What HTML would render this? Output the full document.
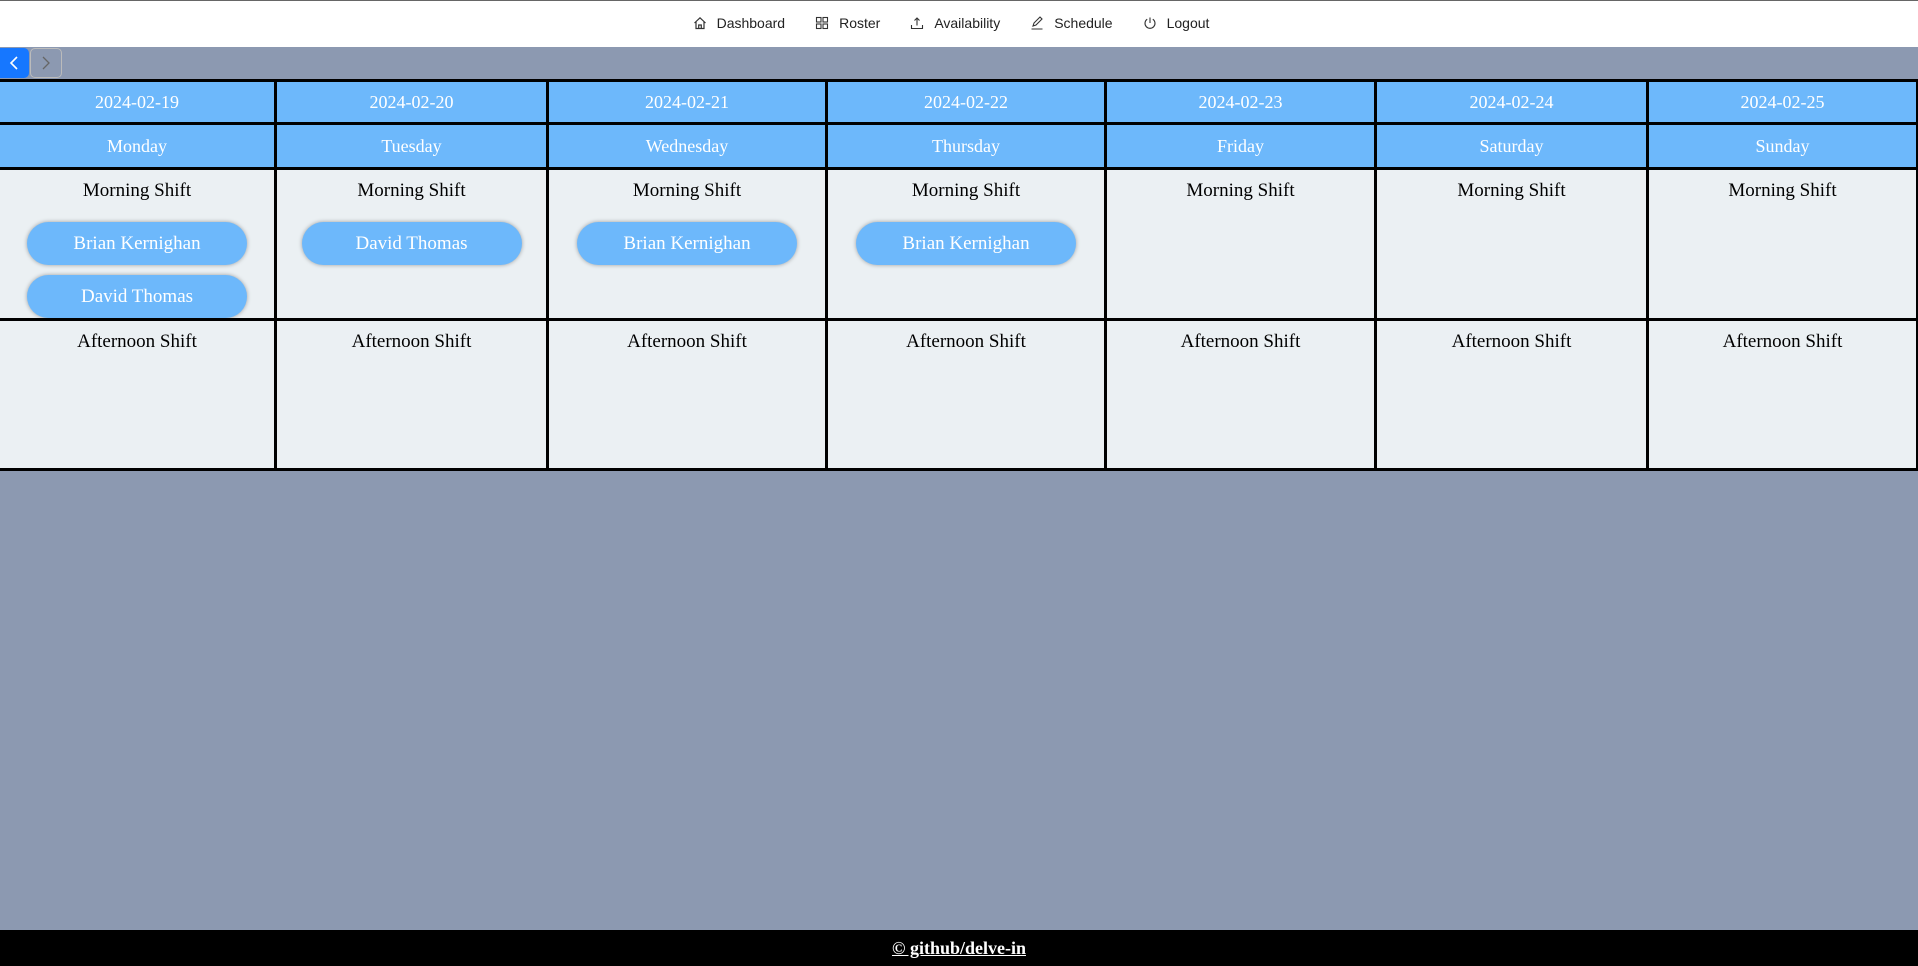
<!DOCTYPE html>
<html><head><meta charset="utf-8"><style>
*{box-sizing:border-box;margin:0;padding:0}
body{width:1918px;height:966px;background:#8c99b1;font-family:"Liberation Serif",serif;position:relative;overflow:hidden}
.top{position:absolute;left:0;top:0;width:1918px;height:47px;background:#fff;border-top:1px solid #666}
.nav{position:absolute;top:14px;left:-8px;width:100%;display:flex;justify-content:center;font-family:"Liberation Sans",sans-serif;font-size:14px;color:#222}
.nav span{display:flex;align-items:center;margin:0 15px}
.nav svg{margin-right:10px}
.b1{position:absolute;left:0;top:48px;width:29px;height:30px;background:#1677ff;border-radius:0 5px 5px 0}
.b2{position:absolute;left:30px;top:48px;width:32px;height:30px;border:1px solid #bbb;border-radius:5px}
table{position:absolute;left:-3px;top:79px;width:1919px;border-collapse:collapse;table-layout:fixed}
td{border:3px solid #000;text-align:center;color:#fff;font-size:18px}
.h td{background:#6db8fb}
.h1 td{height:43px}
.h2 td{height:45px}
.c td{background:#ebf0f3;color:#000;vertical-align:top;padding-top:10px;font-size:19px;line-height:22px}
.m td{height:150px}
.a td{height:150px}
.pill{display:block;margin:20px auto 0;width:220px;height:43px;line-height:43px;border-radius:22px;background:#6db8fb;color:#fff;box-shadow:0 0 4px rgba(0,0,0,.35);font-size:19px}
.pill+.pill{margin-top:10px}
.foot{position:absolute;left:0;top:930px;width:1918px;height:36px;background:#000;color:#fff;text-align:center;font-weight:bold;text-decoration:underline;font-size:18px;line-height:36px}
</style></head><body>
<div class="top"><div class="nav">
<span><svg width="14" height="14" viewBox="0 0 14 14" fill="none" stroke="#333" stroke-width="1.2"><path d="M1.5 7L7 1.8 12.5 7M3 5.8V12.5h8V5.8M5.7 12.5V9h2.6v3.5"/></svg>Dashboard</span>
<span><svg width="14" height="14" viewBox="0 0 14 14" fill="none" stroke="#333" stroke-width="1.1"><rect x="1.5" y="1.5" width="4.5" height="4.5"/><rect x="8" y="1.5" width="4.5" height="4.5"/><rect x="1.5" y="8" width="4.5" height="4.5"/><rect x="8" y="8" width="4.5" height="4.5"/></svg>Roster</span>
<span><svg width="14" height="14" viewBox="0 0 14 14" fill="none" stroke="#333" stroke-width="1.1"><path d="M7 9.5V2M4.5 4.5L7 2l2.5 2.5M1.5 9v3.5h11V9"/></svg>Availability</span>
<span><svg width="14" height="14" viewBox="0 0 14 14" fill="none" stroke="#333" stroke-width="1.1"><path d="M3 10l1-3 6-6 2 2-6 6-3 1zM1.5 13h11"/></svg>Schedule</span>
<span><svg width="14" height="14" viewBox="0 0 14 14" fill="none" stroke="#333" stroke-width="1.1"><path d="M7 1.5v5.5M4.2 3.2a5 5 0 1 0 5.6 0"/></svg>Logout</span>
</div></div>
<div class="b1"><svg width="29" height="30"><path d="M17 9l-6 6 6 6" stroke="#fff" stroke-width="1.6" fill="none"/></svg></div>
<div class="b2"><svg width="30" height="28"><path d="M12 8l6 6-6 6" stroke="#666" stroke-width="1.3" fill="none"/></svg></div>
<table>
<colgroup><col style="width:277px"><col style="width:272px"><col style="width:279px"><col style="width:279px"><col style="width:270px"><col style="width:272px"><col style="width:270px"></colgroup>
<tr class="h h1"><td>2024-02-19</td><td>2024-02-20</td><td>2024-02-21</td><td>2024-02-22</td><td>2024-02-23</td><td>2024-02-24</td><td>2024-02-25</td></tr>
<tr class="h h2"><td>Monday</td><td>Tuesday</td><td>Wednesday</td><td>Thursday</td><td>Friday</td><td>Saturday</td><td>Sunday</td></tr>
<tr class="c m"><td>Morning Shift<span class="pill">Brian Kernighan</span><span class="pill">David Thomas</span></td><td>Morning Shift<span class="pill">David Thomas</span></td><td>Morning Shift<span class="pill">Brian Kernighan</span></td><td>Morning Shift<span class="pill">Brian Kernighan</span></td><td>Morning Shift</td><td>Morning Shift</td><td>Morning Shift</td></tr>
<tr class="c a"><td>Afternoon Shift</td><td>Afternoon Shift</td><td>Afternoon Shift</td><td>Afternoon Shift</td><td>Afternoon Shift</td><td>Afternoon Shift</td><td>Afternoon Shift</td></tr>
</table>
<div class="foot">© github/delve-in</div>
</body></html>
